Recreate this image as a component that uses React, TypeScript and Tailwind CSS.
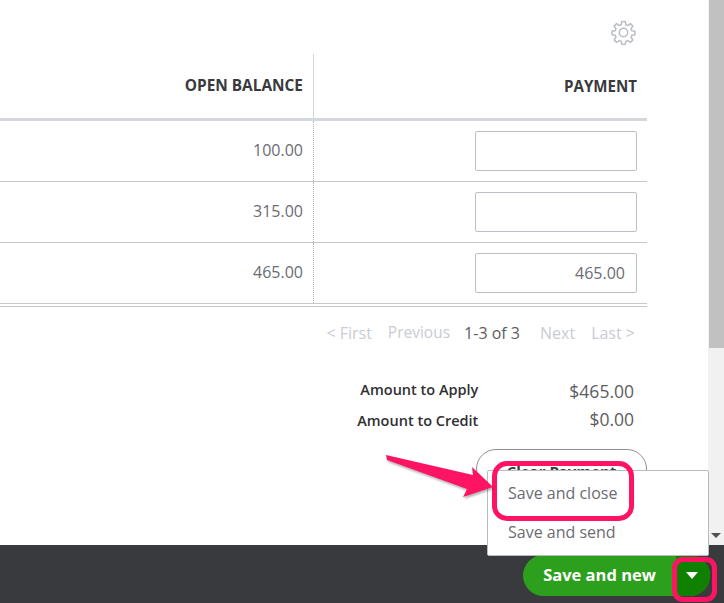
const rows = [
  { balance: "100.00", payment: "" },
  { balance: "315.00", payment: "" },
  { balance: "465.00", payment: "465.00" },
];

function Gear() {
  // 8-lobed outline cog, same as the app's settings button
  return (
    <svg className="mt-[20px] mr-[11px] h-[25px] w-[25px] text-[#babec5]" viewBox="0 0 24 24" fill="none" stroke="currentColor" strokeWidth="1.5" strokeLinejoin="round">
      <path d="M10.3 1.5h3.4l.5 3 1.9.8 2.5-1.8 2.4 2.4-1.8 2.5.8 1.9 3 .5v3.4l-3 .5-.8 1.9 1.8 2.5-2.4 2.4-2.5-1.8-1.9.8-.5 3h-3.4l-.5-3-1.9-.8-2.5 1.8-2.4-2.4 1.8-2.5-.8-1.9-3-.5v-3.4l3-.5.8-1.9-1.8-2.5 2.4-2.4 2.5 1.8 1.9-.8z" />
      <circle cx="12" cy="12" r="4" />
    </svg>
  );
}

export default function App() {
  return (
    <div className="relative flex h-[603px] w-[724px] flex-col overflow-hidden bg-white font-['Open_Sans',sans-serif] text-[#393a3d]">
      <div className="flex h-[545px]">
        <div className="w-[708px] pr-[61px]">
          {/* settings */}
          <div className="flex h-[54px] justify-end">
            <Gear />
          </div>

          {/* table */}
          <div className="flex h-[64px] font-bold">
            <div className="flex w-[314px] items-center justify-end border-r border-[#d4d7dc] pr-[10px] text-[15.4px]">OPEN BALANCE</div>
            <div className="flex flex-1 items-center justify-end pr-[10px] text-[15.1px]">PAYMENT</div>
          </div>
          <div className="h-[3px] bg-[#d4d7dc]" />
          {rows.map((row) => (
            <div key={row.balance} className="flex h-[61px] border-b border-[#c4c7cc] text-base text-[#6b6c72]">
              <div className="flex w-[314px] items-center justify-end border-r border-dotted border-[#b0b3b8] pb-[2px] pr-[10px]">{row.balance}</div>
              <div className="flex flex-1 items-center justify-end pr-[10px]">
                <div className="flex h-10 w-[162px] items-center justify-end rounded-[2px] border border-[#babec5] pr-[11px]">{row.payment}</div>
              </div>
            </div>
          ))}
          <div className="mt-[2px] h-px bg-[#c4c7cc]" />

          {/* pager */}
          <div className="mt-[16px] flex h-5 items-center justify-end pr-3 text-base text-[#c9ccd1]">
            <span>&lt; First</span>
            <span className="ml-[16px] text-[15.5px]">Previous</span>
            <span className="ml-[14px] text-[#5c5d62]">1-3 of 3</span>
            <span className="ml-[20px]">Next</span>
            <span className="ml-[16px]">Last &gt;</span>
          </div>

          {/* totals */}
          <div className="mt-[37px] flex justify-end pr-[13px] text-[14.5px]">
            <div className="flex flex-col items-end gap-[12px] font-semibold leading-[19px] text-[#2f3033]">
              <span>Amount to Apply</span>
              <span>Amount to Credit</span>
            </div>
            <div className="ml-[91px] flex flex-col items-end gap-[9px] pt-[2px] text-[17.5px] leading-[19px] text-[#5c5d62]">
              <span>$465.00</span>
              <span>$0.00</span>
            </div>
          </div>

          <div className="mt-[19px] flex justify-end">
            <div className="h-10 w-[171px] rounded-[20px] border border-[#8d9096] pt-[10px] text-center text-[15px] font-bold">Clear Payment</div>
          </div>
        </div>

        {/* scrollbar */}
        <div className="relative w-4 bg-[#f1f1f1] pl-px">
          <div className="h-[348px] bg-[#c1c1c1]" />
          <div className="absolute bottom-[7px] left-[3px] h-0 w-0 border-x-[5px] border-t-[5px] border-x-transparent border-t-[#505050]" />
        </div>
      </div>

      {/* footer */}
      <div className="flex h-[58px] justify-end bg-[#393a3d] pr-[14px] pt-[10px]">
        <div className="flex h-[41px] w-[187px] overflow-hidden rounded-[21px] bg-[#2ca01c]">
          <div className="flex flex-1 items-center justify-center text-[16.5px] font-bold text-white">Save and new</div>
          <div className="flex w-[34px] items-center justify-center bg-[#108000] pr-[2px]">
            <div className="h-0 w-0 border-x-[6px] border-t-[7px] border-x-transparent border-t-white" />
          </div>
        </div>
      </div>

      {/* dropdown */}
      <div className="absolute left-[487px] top-[470px] flex h-[86px] w-[222px] flex-col rounded-[2px] border border-[#b8bbc0] bg-white pl-[20px] pt-[11px] text-base leading-[22px] text-[#6b6c72]">
        <span>Save and close</span>
        <span className="mt-[17px]">Save and send</span>
      </div>

      {/* annotations */}
      <div className="absolute left-[492px] top-[461px] h-[60px] w-[142px] rounded-[15px] border-[5px] border-[#ff1464]" />
      <div className="absolute left-[672px] top-[557px] h-[45px] w-[45px] rounded-[11px] border-[5px] border-[#ff1464]" />
      <svg className="absolute left-[380px] top-[450px] drop-shadow-[1px_2px_1px_rgba(0,0,0,0.3)]" width="120" height="50" viewBox="0 0 120 50">
        <path d="M6 5 L93 25 L92 17 L113 37 L83 47 L87 39 L7 10 Z" fill="#ff1464" />
      </svg>
    </div>
  );
}
